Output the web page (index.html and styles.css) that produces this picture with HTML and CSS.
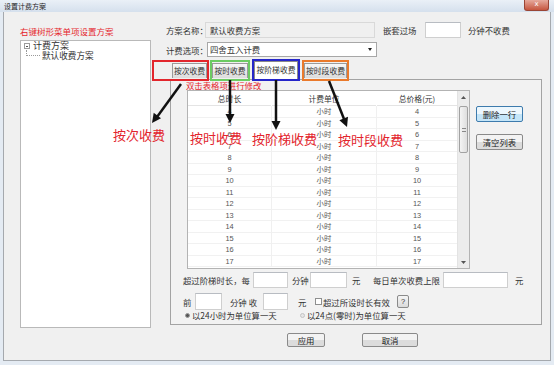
FILE: index.html
```html
<!DOCTYPE html>
<html lang="zh-CN">
<head>
  <meta charset="UTF-8" />
  <title>设置计费方案</title>
  <link rel="stylesheet" href="styles.css">
</head>
<body>
  <div class="window">
    <div class="titlebar">
      <span class="title">设置计费方案</span>
      <span class="close">x</span>
    </div>

    <div class="client">
      <div class="left">
        <div class="red-tip">右键树形菜单项设置方案</div>
        <div class="tree">
          <div class="tree-root"><span class="tree-toggle"></span>计费方案</div>
          <div class="tree-child"><span class="tree-line"></span>默认收费方案</div>
        </div>
      </div>

      <div class="right">
        <div class="row row-name">
          <span class="label w39">方案名称：</span>
          <span class="name-box">默认收费方案</span>
          <span class="label gap-label">嵌套过场</span>
          <span class="input w36"></span>
          <span class="label ml7">分钟不收费</span>
        </div>

        <div class="row row-option">
          <span class="label w41">计费选项：</span>
          <span class="select">四舍五入计费<span class="select-arrow"></span></span>
        </div>

        <div class="tabs">
          <div class="mark mark-red"><span class="tab w35">按次收费</span></div>
          <div class="mark mark-green"><span class="tab w36">按时收费</span></div>
          <div class="mark mark-blue"><span class="tab tab-active">按阶梯收费</span></div>
          <div class="mark mark-orange"><span class="tab w43">按时段收费</span></div>
        </div>

        <div class="panel">
          <div class="edit-hint">双击表格项进行修改</div>

          <div class="grid-area">
            <div class="table">
              <div class="grid-body">
                <div class="grid-row grid-head"><span>总时长</span><span>计费单位</span><span>总价格(元)</span></div>
                <div class="grid-row"><span>4</span><span>小时</span><span>4</span></div>
                <div class="grid-row"><span>5</span><span>小时</span><span>5</span></div>
                <div class="grid-row"><span>6</span><span>小时</span><span>6</span></div>
                <div class="grid-row"><span>7</span><span>小时</span><span>7</span></div>
                <div class="grid-row"><span>8</span><span>小时</span><span>8</span></div>
                <div class="grid-row"><span>9</span><span>小时</span><span>9</span></div>
                <div class="grid-row"><span>10</span><span>小时</span><span>10</span></div>
                <div class="grid-row"><span>11</span><span>小时</span><span>11</span></div>
                <div class="grid-row"><span>12</span><span>小时</span><span>12</span></div>
                <div class="grid-row"><span>13</span><span>小时</span><span>13</span></div>
                <div class="grid-row"><span>14</span><span>小时</span><span>14</span></div>
                <div class="grid-row"><span>15</span><span>小时</span><span>15</span></div>
                <div class="grid-row"><span>16</span><span>小时</span><span>16</span></div>
                <div class="grid-row"><span>17</span><span>小时</span><span>17</span></div>
              </div>
              <div class="vscroll">
                <span class="sb-btn">
                  <svg width="5" height="3" viewBox="0 0 5 3"><polygon points="2.5,0 5,3 0,3" fill="#555"/></svg>
                </span>
                <span class="sb-thumb"><span class="grip"></span></span>
                <span class="sb-space"></span>
                <span class="sb-btn">
                  <svg width="5" height="3" viewBox="0 0 5 3"><polygon points="0,0 5,0 2.5,3" fill="#555"/></svg>
                </span>
              </div>
            </div>
            <div class="side">
              <button class="btn btn-focus">删除一行</button>
              <button class="btn btn-second">清空列表</button>
            </div>
          </div>

          <div class="form-row row-a">
            <span class="w70">超过阶梯时长，每</span>
            <span class="input w35"></span>
            <span class="ml4 w18">分钟</span>
            <span class="input w37"></span>
            <span class="ml5 w21">元</span>
            <span class="w70">每日单次收费上限</span>
            <span class="input w65"></span>
            <span class="ml7">元</span>
          </div>

          <div class="form-row row-b">
            <span class="w12">前</span>
            <span class="input w27"></span>
            <span class="ml8 w33">分钟 收</span>
            <span class="input w25"></span>
            <span class="ml10 w17">元</span>
            <span class="checkbox"></span>
            <span class="w73">超过所设时长有效</span>
            <span class="help">?</span>
          </div>

          <div class="form-row row-c">
            <span class="radio-item w115"><span class="radio radio-on"></span>以24小时为单位算一天</span>
            <span class="radio-item"><span class="radio"></span>以24点(零时)为单位算一天</span>
          </div>
        </div>

        <div class="actions">
          <button class="btn btn-apply">应用</button>
          <button class="btn btn-cancel">取消</button>
        </div>
      </div>
    </div>

    <svg class="arrows" width="554" height="365" viewBox="0 0 554 365">
      <g stroke="#111" stroke-width="2.5" fill="none">
        <line x1="181" y1="84" x2="157" y2="117" />
        <line x1="230" y1="80" x2="230" y2="116" />
        <line x1="276" y1="80" x2="276" y2="123" />
        <line x1="329" y1="81" x2="344" y2="119" />
      </g>
      <g fill="#111">
        <polygon points="152,123 161,118.3 153.7,112.8" />
        <polygon points="230,123 225.5,114 234.5,114" />
        <polygon points="276,130 271.5,121 280.5,121" />
        <polygon points="347,127 348,116.8 339.4,120.2" />
      </g>
    </svg>

    <div class="callout c1">按次收费</div>
    <div class="callout c2">按时收费</div>
    <div class="callout c3">按阶梯收费</div>
    <div class="callout c4">按时段收费</div>
  </div>
</body>
</html>
```

FILE: styles.css
```css
* {
  margin: 0;
  padding: 0;
  box-sizing: border-box;
}
body {
  font-family: "Noto Sans CJK SC", sans-serif;
  font-size: 8.4px;
  color: #333;
  background: #e4ebf3;
}
.window {
  position: relative;
  width: 554px;
  height: 365px;
  background: #e4ebf3;
  overflow: hidden;
}

/* title bar */
.titlebar {
  height: 12px;
  display: flex;
  justify-content: space-between;
  padding-left: 4px;
  background: linear-gradient(#eaf0f7, #d5e0ed);
}
.title {
  font-size: 7px;
  line-height: 12px;
  color: #1e1e1e;
}
.close {
  width: 25px;
  height: 11px;
  margin-right: 5px;
  background: linear-gradient(#e6a99c, #c6563f);
  border: 1px solid #9a4535;
  border-top: none;
  border-radius: 0 0 3px 3px;
  color: #fff;
  font-family: "DejaVu Sans", sans-serif;
  font-size: 7px;
  line-height: 9px;
  text-align: center;
}

/* client area */
.client {
  display: flex;
  height: 349px;
  margin: 0 3px;
  background: #f0f0f0;
  border: 1px solid #a5a9ae;
  border-top: none;
}
.left {
  width: 131px;
  margin-left: 16px;
  padding-top: 13px;
}
.red-tip {
  color: #e5262d;
  font-size: 8.5px;
  line-height: 12px;
}
.tree {
  height: 288px;
  margin-top: 3px;
  padding: 0 0 0 3px;
  background: #fff;
  border: 1px solid #b9b9b9;
}
.tree-root {
  display: flex;
  align-items: center;
  height: 10px;
  font-size: 9px;
  line-height: 10px;
}
.tree-toggle {
  position: relative;
  width: 6px;
  height: 6px;
  margin-right: 3px;
  border: 1px solid #9c9c9c;
}
.tree-toggle::after {
  content: "";
  position: absolute;
  left: 1px;
  top: 1.5px;
  width: 2px;
  height: 1px;
  background: #555;
}
.tree-child {
  display: flex;
  align-items: center;
  height: 9px;
  font-size: 8.6px;
  line-height: 9px;
}
.tree-line {
  width: 14px;
  height: 6px;
  margin: -5px 2px 0 2px;
  border-left: 1px dotted #9a9a9a;
  border-bottom: 1px dotted #9a9a9a;
}

/* right side */
.right {
  width: 376px;
  margin-left: 15px;
  padding-top: 10px;
}
.row {
  display: flex;
  align-items: center;
}
.row-name {
  height: 16px;
}
.row-option {
  height: 15px;
  margin-top: 4px;
}
.label {
  white-space: nowrap;
}
.name-box {
  width: 170px;
  height: 16px;
  padding-left: 4px;
  line-height: 14px;
  border: 1px solid #d9d9d9;
}
.gap-label {
  width: 42px;
  margin-left: 8px;
}
.input {
  height: 100%;
  background: #fff;
  border: 1px solid #cfcfcf;
  border-top-color: #b8bcc2;
}
.select {
  position: relative;
  width: 170px;
  height: 15px;
  padding-left: 2px;
  line-height: 13px;
  background: #fff;
  border: 1px solid #a7a7a7;
}
.select-arrow {
  position: absolute;
  right: 4px;
  top: 5px;
  border-left: 2px solid transparent;
  border-right: 2px solid transparent;
  border-top: 3px solid #222;
}

/* tabs with coloured marks */
.tabs {
  display: flex;
  align-items: flex-end;
  height: 22px;
  margin: 2px 0 0 -14px;
}
.mark {
  position: relative;
  z-index: 1;
  display: flex;
  align-items: center;
  height: 21px;
  border: 2px solid;
}
.mark-red {
  width: 57px;
  justify-content: flex-end;
  border-color: #e2262c;
}
.mark-green {
  width: 40px;
  margin-left: 1px;
  justify-content: center;
  border-color: #6ccb63;
}
.mark-blue {
  width: 48px;
  height: 22px;
  margin-left: 2px;
  border-color: #2626c9;
}
.mark-orange {
  width: 47px;
  margin-left: 2px;
  justify-content: center;
  border-color: #ea7a2c;
}
.tab {
  height: 15px;
  font-size: 7.8px;
  line-height: 13px;
  text-align: center;
  white-space: nowrap;
  background: linear-gradient(#f7f7f7, #dcdcdc);
  border: 1px solid #9b9b9b;
  border-bottom: none;
}
.tab-active {
  width: 44px;
  height: 18px;
  line-height: 16px;
  background: #fff;
  border-color: #8a8a8a;
}

/* tab panel */
.panel {
  width: 372px;
  height: 246px;
  margin: -2px 0 0 4px;
  background: #f2f2f2;
  border: 1px solid #a3a3a3;
}
.edit-hint {
  padding-left: 15px;
  color: #e5262d;
  line-height: 10px;
  white-space: nowrap;
}
.grid-area {
  display: flex;
  padding-left: 16px;
}
.table {
  display: flex;
  width: 283px;
  height: 179px;
  background: #fff;
  border: 1px solid #b3b3b3;
}
.grid-body {
  flex: 1;
}
.grid-row {
  display: grid;
  grid-template-columns: 83px 105px 81px;
  height: 11.5px;
  line-height: 11.5px;
  font-family: "Liberation Sans", "Noto Sans CJK SC", sans-serif;
  font-size: 7.4px;
  color: #555;
  text-align: center;
  border-bottom: 1px solid #f1f1f1;
}
.grid-row span + span {
  border-left: 1px solid #f0f0f0;
}
.grid-head {
  height: 15px;
  line-height: 15px;
  font-family: "Noto Sans CJK SC", sans-serif;
  font-size: 7.8px;
  color: #333;
  border-bottom-color: #e4e4e4;
}
.grid-head span + span {
  border-left-color: #fff;
}
.vscroll {
  display: flex;
  flex-direction: column;
  width: 12px;
  background: #ececec;
  border-left: 1px solid #e3e3e3;
}
.sb-btn {
  display: flex;
  align-items: center;
  justify-content: center;
  height: 12px;
}
.sb-thumb {
  display: flex;
  align-items: center;
  justify-content: center;
  height: 47px;
  margin: 3px 1px 0;
  background: linear-gradient(90deg, #f4f4f4, #dedede);
  border: 1px solid #a2a2a2;
  border-radius: 2px;
}
.grip {
  width: 4px;
  height: 4px;
  border-top: 1px solid #888;
  border-bottom: 1px solid #888;
}
.sb-space {
  flex: 1;
}
.side {
  display: flex;
  flex-direction: column;
  margin-left: 6px;
  padding-top: 16px;
}
.btn {
  font-family: "Noto Sans CJK SC", sans-serif;
  font-size: 8.4px;
  color: #222;
  background: linear-gradient(#f3f3f3 50%, #dcdcdc 50%);
  border: 1px solid #8a8a8a;
  border-radius: 2px;
}
.side .btn {
  width: 47px;
  height: 16px;
}
.btn-focus {
  background: linear-gradient(#edf7fd 50%, #c4e5f8 50%);
  border-color: #3d7bad;
}
.btn-second {
  margin-top: 12px;
}

/* form rows */
.form-row {
  display: flex;
  align-items: center;
  padding-left: 12px;
  white-space: nowrap;
}
.row-a {
  height: 16px;
  margin-top: 3px;
}
.row-b {
  height: 17px;
  margin-top: 5px;
}
.row-c {
  height: 10px;
  padding-left: 14px;
}
.checkbox {
  width: 7px;
  height: 7px;
  margin-right: 1px;
  background: #fff;
  border: 1px solid #8e8f8f;
}
.help {
  width: 12px;
  height: 13px;
  margin-left: 1px;
  font-family: "Liberation Sans", sans-serif;
  font-size: 7.5px;
  line-height: 11px;
  text-align: center;
  background: linear-gradient(#f5f5f5, #dadada);
  border: 1px solid #8a8a8a;
  border-radius: 2px;
}
.radio-item {
  display: flex;
  align-items: center;
}
.radio {
  width: 5px;
  height: 5px;
  margin-right: 2px;
  border-radius: 50%;
  background: #e6e6e6;
  border: 1px solid #c4c4c4;
}
.radio-on {
  background: #555;
  border-color: #999;
}

.actions {
  display: flex;
  margin-top: 8px;
  padding-left: 121px;
}
.actions .btn {
  height: 14px;
  line-height: 11px;
}
.btn-apply {
  width: 38px;
}
.btn-cancel {
  width: 56px;
  margin-left: 37px;
}

/* widths and gaps */
.w12 { width: 12px; }
.w17 { width: 17px; }
.w18 { width: 18px; }
.w21 { width: 21px; }
.w25 { width: 25px; }
.w27 { width: 27px; }
.w33 { width: 33px; }
.w35 { width: 35px; }
.w36 { width: 36px; }
.w37 { width: 37px; }
.w39 { width: 39px; }
.w41 { width: 41px; }
.w43 { width: 43px; }
.w65 { width: 65px; }
.w70 { width: 70px; }
.w73 { width: 73px; }
.w115 { width: 115px; }
.ml4 { margin-left: 4px; }
.ml5 { margin-left: 5px; }
.ml7 { margin-left: 7px; }
.ml8 { margin-left: 8px; }
.ml10 { margin-left: 10px; }

/* annotations drawn over the dialog */
.arrows {
  position: absolute;
  left: 0;
  top: 0;
  z-index: 2;
  pointer-events: none;
}
.callout {
  position: absolute;
  z-index: 3;
  color: #e3252d;
  font-size: 13px;
  line-height: 14px;
  white-space: nowrap;
}
.c1 { left: 113px; top: 128px; }
.c2 { left: 190px; top: 131px; }
.c3 { left: 252px; top: 132px; }
.c4 { left: 338px; top: 133px; }
```
